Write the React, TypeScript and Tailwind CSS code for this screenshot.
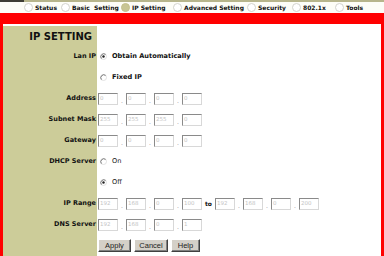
import React from "react";

const KHAKI = "bg-[#cccc99]";

function NavRadio({ on }: { on?: boolean }) {
  return (
    <svg width="9" height="9" viewBox="0 0 9 9" className="shrink-0">
      <circle cx="4.5" cy="4.5" r="4" fill={on ? "#c8c594" : "#ffffff"} stroke={on ? "#c2bf8e" : "#d2d2cc"} strokeWidth="1" />
    </svg>
  );
}

function Radio({ checked }: { checked?: boolean }) {
  return (
    <svg width="7" height="7" viewBox="0 0 7 7" className="shrink-0">
      <circle cx="3.5" cy="3.5" r="3" fill="#ffffff" stroke="#dcdcdc" strokeWidth="0.9" />
      <path d="M5.6 1.4 A3 3 0 0 0 1.4 5.6" fill="none" stroke="#6e6e6e" strokeWidth="0.9" />
      {checked && <circle cx="3.5" cy="3.5" r="1.2" fill="#222" />}
    </svg>
  );
}

function Box({ v }: { v: string }) {
  return (
    <div className="w-[20px] h-[12px] shrink-0 border border-t-[#8a8a8a] border-l-[#8a8a8a] border-b-[#d8d8d8] border-r-[#d8d8d8] bg-white flex items-center pl-[1px] text-[5.5px] leading-none text-[#c4c4c4]">
      {v}
    </div>
  );
}

function Dot() {
  return <span className="w-[8px] text-center text-[6px] leading-none text-[#888] self-end pb-[1px]">.</span>;
}

function Quad({ vals }: { vals: string[] }) {
  return (
    <div className="flex items-center">
      <Box v={vals[0]} />
      <Dot />
      <Box v={vals[1]} />
      <Dot />
      <Box v={vals[2]} />
      <Dot />
      <Box v={vals[3]} />
    </div>
  );
}

function Row({ label, children, h = "h-[21px]" }: { label?: React.ReactNode; children?: React.ReactNode; h?: string }) {
  return (
    <div className={`flex ${h}`}>
      <div className={`w-[94px] shrink-0 ${KHAKI} flex items-center justify-end pr-[1px] font-bold text-[6.5px] text-[#111] whitespace-nowrap`}>
        {label}
      </div>
      <div className="flex-1 flex items-center pl-[1px] text-[6.6px] text-[#111]">{children}</div>
    </div>
  );
}

function Btn({ w, children }: { w: string; children: React.ReactNode }) {
  return (
    <div
      className={`${w} h-[13px] shrink-0 bg-[#d4d0c8] border border-t-white border-l-white border-b-[#404040] border-r-[#404040] flex items-center justify-center text-[7.5px] text-[#222]`}
      style={{ fontFamily: '"Liberation Sans", Arial, sans-serif', boxShadow: "inset -1px -1px 0 #808080" }}
    >
      {children}
    </div>
  );
}

export default function App() {
  const nav: { t: string; w: string; on?: boolean }[] = [
    { t: "Status", w: "w-[37px]" },
    { t: "Basic  Setting", w: "w-[60px]" },
    { t: "IP Setting", w: "w-[52px]", on: true },
    { t: "Advanced Setting", w: "w-[74px]" },
    { t: "Security", w: "w-[45px]" },
    { t: "802.1x", w: "w-[43px]" },
    { t: "Tools", w: "w-[40px]" },
  ];
  return (
    <div
      className="w-[384px] h-[256px] overflow-hidden bg-white"
      style={{ fontFamily: '"DejaVu Sans", Verdana, sans-serif' }}
    >
      <div className="flex h-[2px]">
        <div className="w-[24px] bg-[#3e3d35]" />
        <div className="flex-1 bg-[#b7b58c]" />
      </div>
      <div className="h-[11px] flex items-center pl-[24px] bg-[#fdfdf7]">
        {nav.map((n) => (
          <div key={n.t} className={`${n.w} shrink-0 flex items-center`}>
            <NavRadio on={n.on} />
            <span className="ml-[2px] text-[6px] font-bold text-[#111] whitespace-pre leading-none">{n.t}</span>
          </div>
        ))}
      </div>
      <div className="h-[11px] bg-[#ff0000]" />
      <div className="h-[232px] border-l-[3px] border-r-[3px] border-[#ff0000] flex flex-col">
        <div className="h-[2px] bg-white" />
        <Row h="h-[20px]" label={<span className="text-[10px] pr-[4px]">IP SETTING</span>} />
        <Row label="Lan IP">
          <span className="ml-[2px]"><Radio checked /></span>
          <span className="ml-[5px] font-bold">Obtain Automatically</span>
        </Row>
        <Row>
          <span className="ml-[2px]"><Radio /></span>
          <span className="ml-[5px] font-bold">Fixed IP</span>
        </Row>
        <Row label="Address">
          <Quad vals={["0", "0", "0", "0"]} />
        </Row>
        <Row label="Subnet Mask">
          <Quad vals={["255", "255", "255", "0"]} />
        </Row>
        <Row label="Gateway">
          <Quad vals={["0", "0", "0", "0"]} />
        </Row>
        <Row label="DHCP Server">
          <span className="ml-[2px]"><Radio /></span>
          <span className="ml-[5px]">On</span>
        </Row>
        <Row>
          <span className="ml-[2px]"><Radio checked /></span>
          <span className="ml-[5px]">Off</span>
        </Row>
        <Row label="IP Range">
          <Quad vals={["192", "168", "0", "100"]} />
          <span className="mx-[3px] font-bold text-[6px]">to</span>
          <Quad vals={["192", "168", "0", "200"]} />
        </Row>
        <Row label="DNS Server">
          <Quad vals={["192", "168", "0", "1"]} />
        </Row>
        <Row>
          <div className="flex items-center gap-[3px]">
            <Btn w="w-[33px]">Apply</Btn>
            <Btn w="w-[34px]">Cancel</Btn>
            <Btn w="w-[29px]">Help</Btn>
          </div>
        </Row>
      </div>
    </div>
  );
}
